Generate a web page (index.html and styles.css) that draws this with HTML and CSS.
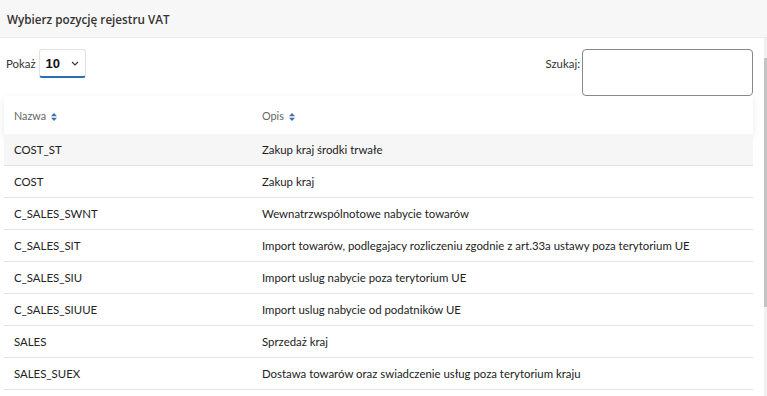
FILE: index.html
```html
<!DOCTYPE html>
<html lang="pl">
<head>
    <meta charset="UTF-8">
    <meta name="viewport" content="width=device-width, initial-scale=1.0">
    <title>Rejestr VAT</title>
    <link rel="stylesheet" href="styles.css">
</head>
<body>
    <div class="modal">
        <div class="modal-header">
            <h5>Wybierz pozycję rejestru VAT</h5>
        </div>

        <div class="modal-main">
            <div class="modal-body">
                <div class="controls">
                    <div class="length">
                        <span class="label">Pokaż</span>
                        <div class="select">
                            <span>10</span>
                            <svg width="8" height="5" viewBox="0 0 8 5"><path d="M1 1 L4 4 L7 1" fill="none" stroke="#333" stroke-width="1.1"/></svg>
                        </div>
                    </div>
                    <div class="search">
                        <span class="label">Szukaj:</span>
                        <input type="text" class="search-input">
                    </div>
                </div>

                <table class="vat-table">
                    <thead>
                        <tr>
                            <th class="col-name">Nazwa <svg class="sort" width="6" height="8" viewBox="0 0 6 8"><path d="M3 0 L6 3.2 L0 3.2 Z M0 4.8 L6 4.8 L3 8 Z" fill="#3f6fa8"/></svg></th>
                            <th>Opis <svg class="sort" width="6" height="8" viewBox="0 0 6 8"><path d="M3 0 L6 3.2 L0 3.2 Z M0 4.8 L6 4.8 L3 8 Z" fill="#3f6fa8"/></svg></th>
                        </tr>
                    </thead>
                    <tbody>
                        <tr class="active"><td>COST_ST</td><td>Zakup kraj środki trwałe</td></tr>
                        <tr><td>COST</td><td>Zakup kraj</td></tr>
                        <tr><td>C_SALES_SWNT</td><td>Wewnatrzwspólnotowe nabycie towarów</td></tr>
                        <tr><td>C_SALES_SIT</td><td>Import towarów, podlegajacy rozliczeniu zgodnie z art.33a ustawy poza terytorium UE</td></tr>
                        <tr><td>C_SALES_SIU</td><td>Import uslug nabycie poza terytorium UE</td></tr>
                        <tr><td>C_SALES_SIUUE</td><td>Import uslug nabycie od podatników UE</td></tr>
                        <tr><td>SALES</td><td>Sprzedaż kraj</td></tr>
                        <tr><td>SALES_SUEX</td><td>Dostawa towarów oraz swiadczenie usług poza terytorium kraju</td></tr>
                    </tbody>
                </table>
            </div>

            <!-- pasek przewijania -->
            <div class="scroll-track"><div class="scroll-thumb"></div></div>
        </div>
    </div>
</body>
</html>
```

FILE: styles.css
```css
body {
    margin: 0;
    padding: 0;
    font-family: "Lato", "Open Sans", sans-serif;
    color: #222;
    background-color: #ffffff;
    overflow: hidden;
}

.modal {
    width: 767px;
    height: 396px;
    overflow: hidden;
}

.modal-header {
    height: 37px;
    background-color: #f7f7f7;
    border-bottom: 1px solid #ececec;
    display: flex;
    align-items: center;
    padding: 0 7px;
}

.modal-header h5 {
    margin: 0;
    font-family: "Open Sans", sans-serif;
    font-weight: 600;
    font-size: 11.7px;
    color: #333;
}

.modal-main {
    display: flex;
}

.modal-body {
    flex: 1;
    padding: 11px 11px 0 4px;
}

.scroll-track {
    width: 3px;
    height: 358px;
    background-color: #f1f1f1;
    padding-top: 20px;
}

.scroll-thumb {
    height: 249px;
    background-color: #c4c4c4;
}

.controls {
    display: flex;
    justify-content: space-between;
    align-items: flex-start;
    padding-left: 2px;
}

.label {
    font-size: 11.4px;
    line-height: 29px;
    color: #333;
}

.length {
    display: flex;
    align-items: flex-start;
}

.select {
    margin-left: 3px;
    border: 1px solid #e2e2e2;
    border-bottom: 2px solid #2a6db3;
    border-radius: 3px;
    display: flex;
    align-items: center;
    justify-content: space-between;
    padding: 0 6px 0 6px;
    box-sizing: border-box;
    height: 29px;
    width: 47px;
    font-family: "Liberation Sans", Arial, sans-serif;
    font-weight: 600;
    font-size: 13px;
    color: #111;
}

.search {
    display: flex;
    align-items: flex-start;
}

.search-input {
    width: 171px;
    height: 47px;
    margin-left: 2px;
    border: 1px solid #888;
    border-radius: 4px;
    box-sizing: border-box;
    padding: 0 8px;
}

.vat-table {
    width: 749px;
    table-layout: fixed;
    border-collapse: collapse;
    font-size: 11.4px;
}

.vat-table thead tr {
    box-shadow: 0 3px 8px rgba(0, 0, 0, 0.09);
    background-color: #fff;
}

.vat-table th {
    height: 38px;
    text-align: left;
    font-weight: normal;
    font-size: 10.8px;
    color: #666;
    padding: 0 10px;
}

.vat-table th.col-name {
    width: 228px;
}

.sort {
    margin-left: 2px;
    vertical-align: -1px;
}

.vat-table td {
    height: 31px;
    padding: 0 10px;
    border-bottom: 1px solid #e3e3e3;
    color: #222;
    white-space: nowrap;
}

.vat-table tr.active td {
    background-color: #f6f6f6;
}
```
